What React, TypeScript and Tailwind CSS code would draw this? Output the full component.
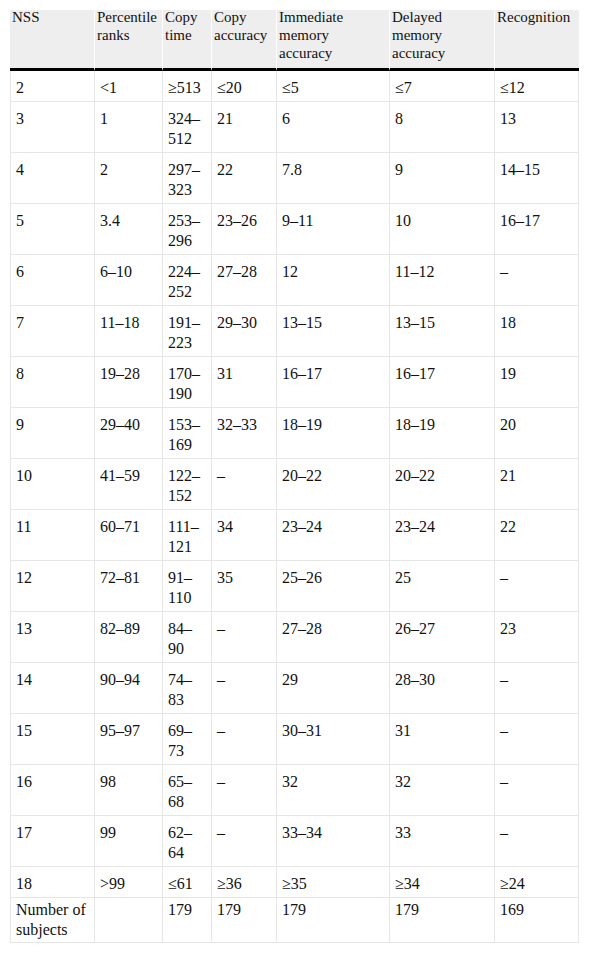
const headers = [
  'NSS',
  'Percentile\nranks',
  'Copy\ntime',
  'Copy\naccuracy',
  'Immediate\nmemory\naccuracy',
  'Delayed\nmemory\naccuracy',
  'Recognition',
];

const colWidths = ['w-[85px]', 'w-[68px]', 'w-[49px]', 'w-[65px]', 'w-[113px]', 'w-[105px]', 'w-[84px]'];

const rows: string[][] = [
  ['2', '<1', '≥513', '≤20', '≤5', '≤7', '≤12'],
  ['3', '1', '324–\n512', '21', '6', '8', '13'],
  ['4', '2', '297–\n323', '22', '7.8', '9', '14–15'],
  ['5', '3.4', '253–\n296', '23–26', '9–11', '10', '16–17'],
  ['6', '6–10', '224–\n252', '27–28', '12', '11–12', '–'],
  ['7', '11–18', '191–\n223', '29–30', '13–15', '13–15', '18'],
  ['8', '19–28', '170–\n190', '31', '16–17', '16–17', '19'],
  ['9', '29–40', '153–\n169', '32–33', '18–19', '18–19', '20'],
  ['10', '41–59', '122–\n152', '–', '20–22', '20–22', '21'],
  ['11', '60–71', '111–\n121', '34', '23–24', '23–24', '22'],
  ['12', '72–81', '91–\n110', '35', '25–26', '25', '–'],
  ['13', '82–89', '84–\n90', '–', '27–28', '26–27', '23'],
  ['14', '90–94', '74–\n83', '–', '29', '28–30', '–'],
  ['15', '95–97', '69–\n73', '–', '30–31', '31', '–'],
  ['16', '98', '65–\n68', '–', '32', '32', '–'],
  ['17', '99', '62–\n64', '–', '33–34', '33', '–'],
  ['18', '>99', '≤61', '≥36', '≥35', '≥34', '≥24'],
];

const totals = ['Number of\nsubjects', '', '179', '179', '179', '179', '169'];

export default function App() {
  return (
    <div className="bg-white p-[10px] font-[Liberation_Serif,Times_New_Roman,serif] text-[16px] text-[#111]">
      <table className="table-fixed border-separate border-spacing-0 w-[569px]">
        <colgroup>
          {colWidths.map((w, i) => (
            <col key={i} className={w} />
          ))}
        </colgroup>
        <thead>
          <tr>
            {headers.map((h, i) => (
              <th
                key={i}
                className={`bg-[#eeeeee] border-b-[3px] border-b-black ${
                  i < headers.length - 1 ? 'border-r border-r-white' : ''
                } pl-[2px] pr-[2px] pt-0 pb-[6px] text-left align-top text-[15px] font-normal`}
              >
                <div className="-mt-[2px] whitespace-pre-line leading-[18px]">{h}</div>
              </th>
            ))}
          </tr>
        </thead>
        <tbody>
          {rows.map((r, ri) => (
            <tr key={ri}>
              {r.map((c, ci) => (
                <td
                  key={ci}
                  className={`border-b border-r border-[#e6e6e6] ${
                    ci === 0 ? 'border-l' : ''
                  } pl-[5px] pr-[2px] pt-[7px] pb-[3px] align-top whitespace-pre-line leading-[20px]`}
                >
                  {c}
                </td>
              ))}
            </tr>
          ))}
          <tr>
            {totals.map((c, ci) => (
              <td
                key={ci}
                className={`border-b border-r border-[#e6e6e6] ${
                  ci === 0 ? 'border-l' : ''
                } pl-[5px] pr-[2px] pt-[2px] pb-[2px] align-top whitespace-pre-line leading-[20px]`}
              >
                {c}
              </td>
            ))}
          </tr>
        </tbody>
      </table>
    </div>
  );
}
